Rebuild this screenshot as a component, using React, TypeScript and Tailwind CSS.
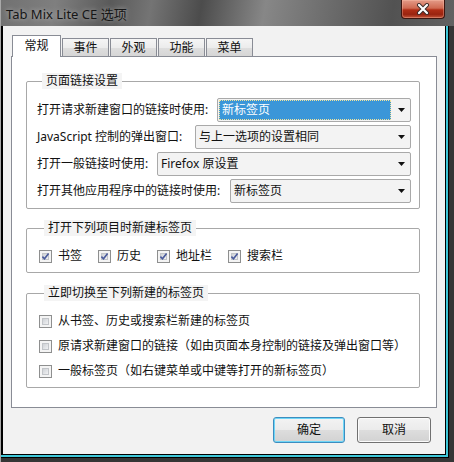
import React from "react";

const font = "font-['Segoe_UI','Noto_Sans','Noto_Sans_CJK_SC',sans-serif]";

function Check({ checked }: { checked?: boolean }) {
  return (
    <span className="relative w-[13px] h-[13px] shrink-0 border border-[#8e8f8f] bg-[#f4f4f4] p-[2px] flex">
      <span className="flex-1 border border-[#c2c5c9] bg-[linear-gradient(135deg,#cfd2d6,#f0f1f3)]" />
      {checked && (
        <svg className="absolute left-[-1px] top-[-1px]" width="13" height="13" viewBox="0 0 13 13">
          <path d="M3.4 6.6 L5.5 8.8 L9.6 3.4" fill="none" stroke="#4a5b9c" strokeWidth="1.6" />
        </svg>
      )}
    </span>
  );
}

function Select({
  width,
  text,
  focused,
}: {
  width: string;
  text: string;
  focused?: boolean;
}) {
  return (
    <div className={`${width} h-[24px] shrink-0 flex border border-[#a9a9a9] rounded-[2px] bg-[#f3f3f3]`}>
      {focused ? (
        <div className="flex-1 m-[1px] flex items-center pl-[2px] bg-[#3b96d8] border border-dotted border-[#f3e39a] text-white">
          {text}
        </div>
      ) : (
        <div className="flex-1 flex items-center pl-[3px] text-[#111]">{text}</div>
      )}
      <div className="w-[18px] flex items-center justify-center">
        <svg width="7" height="4" viewBox="0 0 7 4">
          <path d="M0 0 H7 L3.5 4 Z" fill="#111" />
        </svg>
      </div>
    </div>
  );
}

function Group({
  title,
  className,
  children,
}: {
  title: string;
  className: string;
  children: React.ReactNode;
}) {
  return (
    <fieldset className={`w-[394px] border border-[#a8a8a8] rounded-[2px] ${className}`}>
      <legend className="ml-[5px] px-[4px] bg-[#f4f4f4] leading-[16px] text-[#111]">{title}</legend>
      {children}
    </fieldset>
  );
}

function Row({ label, children }: { label: string; children: React.ReactNode }) {
  return (
    <div className="h-[24px] flex items-center justify-between">
      <span>{label}</span>
      {children}
    </div>
  );
}

function CheckItem({ label, checked }: { label: string; checked?: boolean }) {
  return (
    <div className="h-[16px] flex items-center gap-[6px]">
      <Check checked={checked} />
      <span>{label}</span>
    </div>
  );
}

export default function App() {
  const tabs = ["事件", "外观", "功能", "菜单"];
  return (
    <div className={`w-[454px] h-[462px] flex flex-col bg-[#353535] overflow-hidden text-[12px] leading-[16px] text-[#111] ${font}`}>
      {/* title bar */}
      <div className="h-[26px] shrink-0 flex items-start border-l border-[#a8a8a8] bg-[linear-gradient(100deg,#717171_0%,#7f7f7f_12%,#5a5a5a_24%,#747474_33%,#4c4c4c_44%,#878787_58%,#6c6c6c_72%,#525252_86%,#626262_100%)]">
        <span className="pt-[6px] pl-[5px] text-[13px] leading-[16px] text-[#161616] [text-shadow:0_0_5px_rgba(255,255,255,0.55)]">
          Tab Mix Lite CE 选项
        </span>
        <div className="ml-auto mr-[9px] w-[44px] h-[19px] flex items-center justify-center rounded-b-[4px] border border-t-0 border-[#3d1610] bg-[linear-gradient(180deg,#e49b88_0%,#cf6a52_45%,#b02e16_55%,#9a2410_80%,#c4553a_100%)] shadow-[inset_0_0_0_1px_rgba(255,200,180,0.35)]">
          <svg width="14" height="12" viewBox="0 0 14 12">
            <path d="M3 2 L11 10 M11 2 L3 10" stroke="#3a2a28" strokeWidth="4" strokeLinecap="round" />
            <path d="M3 2 L11 10 M11 2 L3 10" stroke="#ffffff" strokeWidth="2.2" strokeLinecap="round" />
          </svg>
        </div>
      </div>

      {/* frame body */}
      <div className="flex-1 flex flex-col border-l border-[#a8a8a8] pr-[5px] pb-[4px]">
        <div className="flex-1 flex flex-col border-r border-b border-black">
          <div className="flex-1 flex flex-col border-r-2 border-b-2 border-[#3fc7d8]">
            <div className="flex-1 flex flex-col border-l-2 border-r border-b border-black">
              {/* client */}
              <div className="flex-1 flex flex-col bg-[#f2f2f2] pt-[9px] px-[8px]">
                {/* tabs */}
                <div className="h-[21px] flex items-end pl-[1px]">
                  <div className="relative z-10 w-[49px] h-[22px] -mb-px flex justify-center pt-[2px] bg-white border border-b-0 border-[#898c95]">
                    常规
                  </div>
                  <div className="flex gap-[1px] ml-[1px]">
                    {tabs.map((t) => (
                      <div
                        key={t}
                        className="w-[47px] h-[18px] flex justify-center pt-[1px] border border-b-0 border-[#898c95] bg-[linear-gradient(180deg,#f5f5f5_0%,#ececec_50%,#dedede_51%,#d6d6d6_100%)]"
                      >
                        {t}
                      </div>
                    ))}
                  </div>
                </div>

                {/* panel */}
                <div className="w-[426px] h-[352px] flex flex-col border border-[#898c95] bg-white pt-[16px] pl-[14px]">
                  <Group title="页面链接设置" className="pl-[10px] pr-[8px] pt-[9px] pb-[5px]">
                    <div className="flex flex-col gap-[3px]">
                      <Row label="打开请求新建窗口的链接时使用:">
                        <Select width="w-[194px]" text="新标签页" focused />
                      </Row>
                      <Row label="JavaScript 控制的弹出窗口:">
                        <Select width="w-[216px]" text="与上一选项的设置相同" />
                      </Row>
                      <Row label="打开一般链接时使用:">
                        <Select width="w-[254px]" text="Firefox 原设置" />
                      </Row>
                      <Row label="打开其他应用程序中的链接时使用:">
                        <Select width="w-[181px]" text="新标签页" />
                      </Row>
                    </div>
                  </Group>

                  <Group title="打开下列项目时新建标签页" className="mt-[11px] pl-[12px] pt-[12px] pb-[8px]">
                    <div className="flex gap-[16px]">
                      <CheckItem label="书签" checked />
                      <CheckItem label="历史" checked />
                      <CheckItem label="地址栏" checked />
                      <CheckItem label="搜索栏" checked />
                    </div>
                  </Group>

                  <Group title="立即切换至下列新建的标签页" className="mt-[12px] pl-[12px] pt-[12px] pb-[8px]">
                    <div className="flex flex-col gap-[9px]">
                      <CheckItem label="从书签、历史或搜索栏新建的标签页" />
                      <CheckItem label="原请求新建窗口的链接（如由页面本身控制的链接及弹出窗口等）" />
                      <CheckItem label="一般标签页（如右键菜单或中键等打开的新标签页）" />
                    </div>
                  </Group>
                </div>

                {/* buttons */}
                <div className="flex justify-end gap-[12px] mt-[9px] pr-[6px]">
                  <button className="w-[72px] h-[26px] rounded-[3px] border border-[#3c8dbf] shadow-[inset_0_0_0_1px_#6fd6f7] bg-[linear-gradient(180deg,#f3f3f3_0%,#ebebeb_50%,#dddddd_51%,#d2d2d2_100%)]">
                    确定
                  </button>
                  <button className="w-[74px] h-[26px] rounded-[3px] border border-[#707070] shadow-[inset_0_0_0_1px_#fbfbfb] bg-[linear-gradient(180deg,#f3f3f3_0%,#ebebeb_50%,#dddddd_51%,#d2d2d2_100%)]">
                    取消
                  </button>
                </div>
              </div>
            </div>
          </div>
        </div>
      </div>
    </div>
  );
}
